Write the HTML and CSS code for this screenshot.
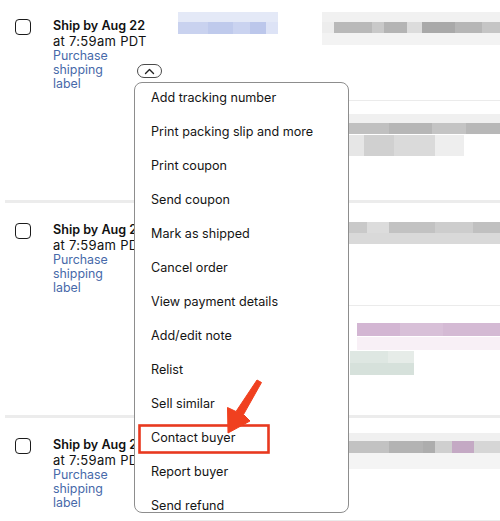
FILE: index.html
```html
<!DOCTYPE html>
<html lang="en">
  <head>
    <meta charset="UTF-8" />
    <meta name="viewport" content="width=device-width, initial-scale=1.0" />
    <title>Orders</title>
    <link rel="stylesheet" href="styles.css">
  </head>
  <body>
    <div class="page">
      <div class="orders">
        <!-- order 1 -->
        <div class="order">
          <div class="check"><span class="box"></span></div>
          <div class="ship">
            <div class="ship-by">Ship by Aug 22</div>
            <div class="ship-time">at 7:59am PDT</div>
            <a class="ship-link" href="#">Purchase shipping label</a>
          </div>
          <div class="actions">
            <button class="toggle" aria-label="Close actions">
              <svg width="11" height="7" viewBox="0 0 11 7"><path d="M1.5 5.5 L5.5 1.5 L9.5 5.5" fill="none" stroke="#222" stroke-width="1.4" stroke-linecap="round" stroke-linejoin="round"/></svg>
            </button>
          </div>
          <div class="details">
            <div class="part part-top row1-top">
              <div class="blur blur-blue"></div>
              <div class="blur blur-gray wide"></div>
            </div>
            <div class="part part-sub row1-sub">
              <div class="blur blur-gray sub"></div>
            </div>
          </div>
        </div>

        <!-- order 2 -->
        <div class="order">
          <div class="check"><span class="box"></span></div>
          <div class="ship">
            <div class="ship-by">Ship by Aug 22</div>
            <div class="ship-time">at 7:59am PDT</div>
            <a class="ship-link" href="#">Purchase shipping label</a>
          </div>
          <div class="actions">
            <button class="toggle" aria-label="Open actions"></button>
          </div>
          <div class="details">
            <div class="part part-top row2-top">
              <div class="blur blur-gray light"></div>
            </div>
            <div class="part part-sub row2-sub">
              <div class="blur blur-purple"></div>
              <div class="blur blur-green"></div>
            </div>
          </div>
        </div>

        <!-- order 3 -->
        <div class="order">
          <div class="check"><span class="box"></span></div>
          <div class="ship">
            <div class="ship-by">Ship by Aug 22</div>
            <div class="ship-time">at 7:59am PDT</div>
            <a class="ship-link" href="#">Purchase shipping label</a>
          </div>
          <div class="actions">
            <button class="toggle" aria-label="Open actions"></button>
          </div>
          <div class="details">
            <div class="part part-top row3-top">
              <div class="blur blur-gray mixed"></div>
            </div>
            <div class="part part-sub"></div>
          </div>
        </div>
      </div>

      <div class="menu">
        <ul class="menu-list">
          <li>Add tracking number</li>
          <li>Print packing slip and more</li>
          <li>Print coupon</li>
          <li>Send coupon</li>
          <li>Mark as shipped</li>
          <li>Cancel order</li>
          <li>View payment details</li>
          <li>Add/edit note</li>
          <li>Relist</li>
          <li>Sell similar</li>
          <li>Contact buyer</li>
          <li>Report buyer</li>
          <li>Send refund</li>
        </ul>
      </div>

      <!-- annotation drawn over the screenshot -->
      <svg class="markup" width="500" height="521" viewBox="0 0 500 521">
        <rect x="139.5" y="425.5" width="129" height="27" fill="none" stroke="#e8391f" stroke-width="2.6"/>
        <path d="M257 380 L261.5 382.5 L243.5 414.5 L250 421 L228 433 L227.5 407.5 L236 411.5 Z" fill="#f0401f" stroke="#f0401f" stroke-width="1" stroke-linejoin="round"/>
      </svg>
    </div>
  </body>
</html>
```

FILE: styles.css
```css
body {
    margin: 0;
    background-color: #fff;
    font-family: Inter, "Liberation Sans", Arial, sans-serif;
    font-size: 13px;
    color: #111;
}
.page {
    position: relative;
    width: 500px;
    height: 521px;
    overflow: hidden;
}
.orders {
    margin-left: 5px;
}
.order {
    display: grid;
    grid-template-columns: 48px 86px 31px 1fr;
    border-bottom: 3px solid #ececec;
}
.order:first-child .check {
    padding-top: 19px;
}
.order:first-child .ship {
    padding-top: 18px;
}
.check {
    padding-top: 20px;
    padding-left: 10px;
}
.box {
    display: block;
    width: 14px;
    height: 14px;
    border: 1.6px solid #1b1b1b;
    border-radius: 4px;
}
.ship {
    padding-top: 19px;
}
.ship-by {
    font-size: 12.6px;
    font-weight: 600;
    line-height: 16px;
    white-space: nowrap;
}
.ship-time {
    line-height: 14px;
    letter-spacing: 0.3px;
    white-space: nowrap;
}
.ship-link {
    display: block;
    width: 66px;
    margin-top: 1px;
    font-size: 12.4px;
    line-height: 14px;
    color: #4769a9;
    text-decoration: none;
}
.actions {
    padding-top: 64px;
}
.toggle {
    display: flex;
    align-items: center;
    justify-content: center;
    width: 25px;
    height: 14px;
    margin-left: -2px;
    padding: 0;
    border: 1px solid #4a4a4a;
    border-radius: 7px;
    background-color: #fff;
}
.part-sub {
    border-top: 1px solid #ebebeb;
}
.row1-top {
    display: flex;
    height: 100px;
    padding-top: 12px;
    box-sizing: border-box;
}
.row1-sub {
    height: 100px;
    padding-top: 13px;
    box-sizing: border-box;
}
.row2-top {
    height: 102px;
    padding-top: 19px;
    box-sizing: border-box;
}
.row2-sub {
    height: 110px;
    padding-top: 17px;
    box-sizing: border-box;
}
.row3-top {
    height: 102px;
    padding-top: 15px;
    box-sizing: border-box;
}

/* pixelated blur of hidden data */
.blur {
    height: 22px;
}
.blur-blue {
    width: 100px;
    margin-left: 8px;
    background:
        linear-gradient(#e4e9f7 0 45%, transparent 45%),
        linear-gradient(90deg, #c9d2ef 0 30%, #bfcaec 30% 55%, #cad3f0 55% 72%, #bcc7eb 72% 88%, #dde3f6 88%);
}
.blur-gray.wide {
    width: 178px;
    height: 33px;
    margin-left: 44px;
    background:
        linear-gradient(#f1f1f1 0 30%, transparent 30% 65%, #f3f3f3 65%),
        linear-gradient(90deg, #ededed 0 7%, #b9b9b9 7% 28%, #c9c9c9 28% 35%, #b4b4b4 35% 48%, #dcdcdc 48% 56%, #a9a9a9 56% 75%, #b6b6b6 75% 90%, #c5c5c5 90%);
}
.blur-gray.sub {
    width: 170px;
    height: 42px;
    margin-left: 160px;
    background:
        linear-gradient(#f0f0f0 0 22%, transparent 22% 48%, #fff 48%),
        linear-gradient(90deg, #c0c0c0 0 35%, #b6b6b6 35% 60%, #c4c4c4 60% 80%, #b8b8b8 80%);
    position: relative;
}
.blur-gray.sub::after {
    content: "";
    position: absolute;
    left: 0;
    top: 21px;
    width: 79%;
    height: 21px;
    background: linear-gradient(90deg, #d6d6d6 0 12%, #e6e6e6 12% 25%, #d0d0d0 25% 48%, #dadada 48% 78%, #eeeeee 78%);
}
.blur-gray.light {
    width: 170px;
    height: 22px;
    margin-left: 160px;
    background:
        linear-gradient(transparent 0 48%, #d9d9d9 48%),
        linear-gradient(90deg, #c9c9c9 0 22%, #dcdcdc 22% 35%, #c2c2c2 35% 62%, #cdcdcd 62% 84%, #c0c0c0 84%);
}
.blur-purple {
    width: 143px;
    height: 13px;
    margin-left: 187px;
    background: linear-gradient(90deg, #d3b6d3 0 30%, #d8c0d8 30% 60%, #d4bad4 60%);
    box-shadow: 0 14px 0 #f8f0f6;
}
.blur-green {
    width: 64px;
    height: 24px;
    margin-top: 15px;
    margin-left: 180px;
    background:
        linear-gradient(transparent 0 50%, #d6e1db 50%),
        linear-gradient(90deg, #dee7e2 0 60%, #e6ece8 60%);
}
.blur-gray.mixed {
    width: 170px;
    height: 36px;
    margin-left: 160px;
    background:
        linear-gradient(#f0f0f0 0 22%, transparent 22% 55%, #f4f4f4 55%),
        linear-gradient(90deg, #c2c2c2 0 35%, #b3b3b3 35% 55%, #adadad 55% 62%, #cfcfcf 62% 72%, #c4a9c4 72% 85%, #d6d6d6 85%);
}

/* open actions menu */
.menu {
    position: absolute;
    top: 82px;
    left: 134px;
    width: 213px;
    height: 429px;
    border: 1px solid #8d8d8d;
    border-radius: 8px;
    background-color: #fff;
    overflow: hidden;
}
.menu-list {
    list-style: none;
    margin: -2px 0 0;
    padding: 0;
}
.menu-list li {
    height: 34px;
    line-height: 34px;
    padding-left: 16px;
    font-size: 12.6px;
    white-space: nowrap;
    color: #151515;
}
.markup {
    position: absolute;
    top: 0;
    left: 0;
    pointer-events: none;
}
```
